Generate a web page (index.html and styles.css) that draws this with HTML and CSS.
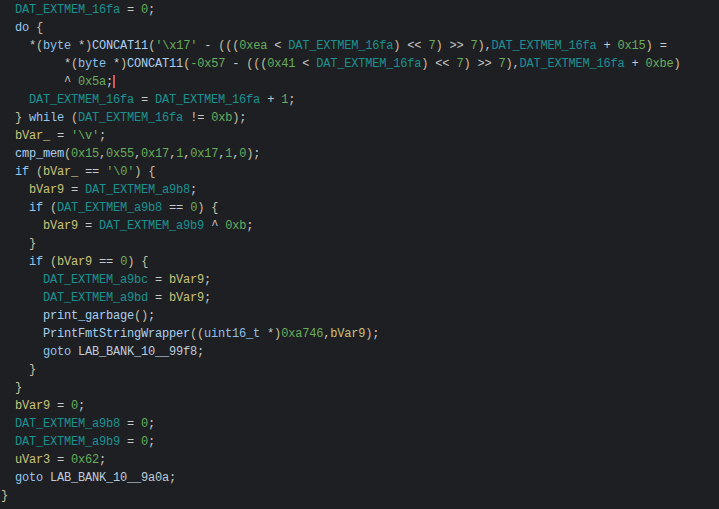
FILE: index.html
```html
<!DOCTYPE html>
<html>
<head>
<meta charset="utf-8">
<link rel="stylesheet" href="styles.css">
</head>
<body>
<div class="code">
<div class="ln">  <span class="g">DAT_EXTMEM_16fa</span> <span class="o">=</span> <span class="n">0</span><span class="o">;</span></div>
<div class="ln">  <span class="k">do</span> <span class="b">{</span></div>
<div class="ln">    <span class="o">*</span><span class="b">(</span><span class="t">byte</span> <span class="o">*</span><span class="b">)</span><span class="f">CONCAT11</span><span class="b">(</span><span class="n">'\x17'</span> <span class="o">-</span> <span class="b">(((</span><span class="n">0xea</span> <span class="o">&lt;</span> <span class="g">DAT_EXTMEM_16fa</span><span class="b">)</span> <span class="o">&lt;&lt;</span> <span class="n">7</span><span class="b">)</span> <span class="o">&gt;&gt;</span> <span class="n">7</span><span class="b">)</span><span class="o">,</span><span class="g">DAT_EXTMEM_16fa</span> <span class="o">+</span> <span class="n">0x15</span><span class="b">)</span> <span class="o">=</span></div>
<div class="ln">         <span class="o">*</span><span class="b">(</span><span class="t">byte</span> <span class="o">*</span><span class="b">)</span><span class="f">CONCAT11</span><span class="b">(</span><span class="n">-0x57</span> <span class="o">-</span> <span class="b">(((</span><span class="n">0x41</span> <span class="o">&lt;</span> <span class="g">DAT_EXTMEM_16fa</span><span class="b">)</span> <span class="o">&lt;&lt;</span> <span class="n">7</span><span class="b">)</span> <span class="o">&gt;&gt;</span> <span class="n">7</span><span class="b">)</span><span class="o">,</span><span class="g">DAT_EXTMEM_16fa</span> <span class="o">+</span> <span class="n">0xbe</span><span class="b">)</span></div>
<div class="ln">         <span class="o">^</span> <span class="n">0x5a</span><span class="o">;</span><span class="caret"></span></div>
<div class="ln">    <span class="g">DAT_EXTMEM_16fa</span> <span class="o">=</span> <span class="g">DAT_EXTMEM_16fa</span> <span class="o">+</span> <span class="n">1</span><span class="o">;</span></div>
<div class="ln">  <span class="b">}</span> <span class="k">while</span> <span class="b">(</span><span class="g">DAT_EXTMEM_16fa</span> <span class="o">!=</span> <span class="n">0xb</span><span class="b">)</span><span class="o">;</span></div>
<div class="ln">  <span class="v">bVar_</span> <span class="o">=</span> <span class="n">'\v'</span><span class="o">;</span></div>
<div class="ln">  <span class="f">cmp_mem</span><span class="b">(</span><span class="n">0x15</span><span class="o">,</span><span class="n">0x55</span><span class="o">,</span><span class="n">0x17</span><span class="o">,</span><span class="n">1</span><span class="o">,</span><span class="n">0x17</span><span class="o">,</span><span class="n">1</span><span class="o">,</span><span class="n">0</span><span class="b">)</span><span class="o">;</span></div>
<div class="ln">  <span class="k">if</span> <span class="b">(</span><span class="v">bVar_</span> <span class="o">==</span> <span class="n">'\0'</span><span class="b">)</span> <span class="b">{</span></div>
<div class="ln">    <span class="v">bVar9</span> <span class="o">=</span> <span class="g">DAT_EXTMEM_a9b8</span><span class="o">;</span></div>
<div class="ln">    <span class="k">if</span> <span class="b">(</span><span class="g">DAT_EXTMEM_a9b8</span> <span class="o">==</span> <span class="n">0</span><span class="b">)</span> <span class="b">{</span></div>
<div class="ln">      <span class="v">bVar9</span> <span class="o">=</span> <span class="g">DAT_EXTMEM_a9b9</span> <span class="o">^</span> <span class="n">0xb</span><span class="o">;</span></div>
<div class="ln">    <span class="b">}</span></div>
<div class="ln">    <span class="k">if</span> <span class="b">(</span><span class="v">bVar9</span> <span class="o">==</span> <span class="n">0</span><span class="b">)</span> <span class="b">{</span></div>
<div class="ln">      <span class="g">DAT_EXTMEM_a9bc</span> <span class="o">=</span> <span class="v">bVar9</span><span class="o">;</span></div>
<div class="ln">      <span class="g">DAT_EXTMEM_a9bd</span> <span class="o">=</span> <span class="v">bVar9</span><span class="o">;</span></div>
<div class="ln">      <span class="f">print_garbage</span><span class="b">()</span><span class="o">;</span></div>
<div class="ln">      <span class="f">PrintFmtStringWrapper</span><span class="b">((</span><span class="t">uint16_t</span> <span class="o">*</span><span class="b">)</span><span class="n">0xa746</span><span class="o">,</span><span class="v">bVar9</span><span class="b">)</span><span class="o">;</span></div>
<div class="ln">      <span class="k">goto</span> <span class="l">LAB_BANK_10__99f8</span><span class="o">;</span></div>
<div class="ln">    <span class="b">}</span></div>
<div class="ln">  <span class="b">}</span></div>
<div class="ln">  <span class="v">bVar9</span> <span class="o">=</span> <span class="n">0</span><span class="o">;</span></div>
<div class="ln">  <span class="g">DAT_EXTMEM_a9b8</span> <span class="o">=</span> <span class="n">0</span><span class="o">;</span></div>
<div class="ln">  <span class="g">DAT_EXTMEM_a9b9</span> <span class="o">=</span> <span class="n">0</span><span class="o">;</span></div>
<div class="ln">  <span class="v">uVar3</span> <span class="o">=</span> <span class="n">0x62</span><span class="o">;</span></div>
<div class="ln">  <span class="k">goto</span> <span class="l">LAB_BANK_10__9a0a</span><span class="o">;</span></div>
<div class="ln"><span class="b">}</span></div>
</div>
</body>
</html>
```

FILE: styles.css
```css
html, body {
  margin: 0;
  padding: 0;
  background: #1e1f22;
  height: 100%;
  overflow: hidden;
}

.code {
  padding: 1px 0 0 1px;
  font-family: "Liberation Mono", "Courier New", monospace;
  font-size: 12px;
  letter-spacing: -0.2px;
  line-height: 18px;
  color: #c8c8c8;
}

.ln {
  white-space: pre;
  height: 18px;
}

.g { color: #1b9191; }
.n { color: #67ad5d; }
.k { color: #93c7ee; }
.f { color: #a9cff0; }
.t { color: #8cc0ea; }
.v { color: #c9c27a; }
.o { color: #c8c8c8; }
.b { color: #cbbf9f; }
.l { color: #bcccdc; }

.caret {
  display: inline-block;
  width: 2px;
  height: 13px;
  background: #d9535b;
  vertical-align: -3px;
}
```
